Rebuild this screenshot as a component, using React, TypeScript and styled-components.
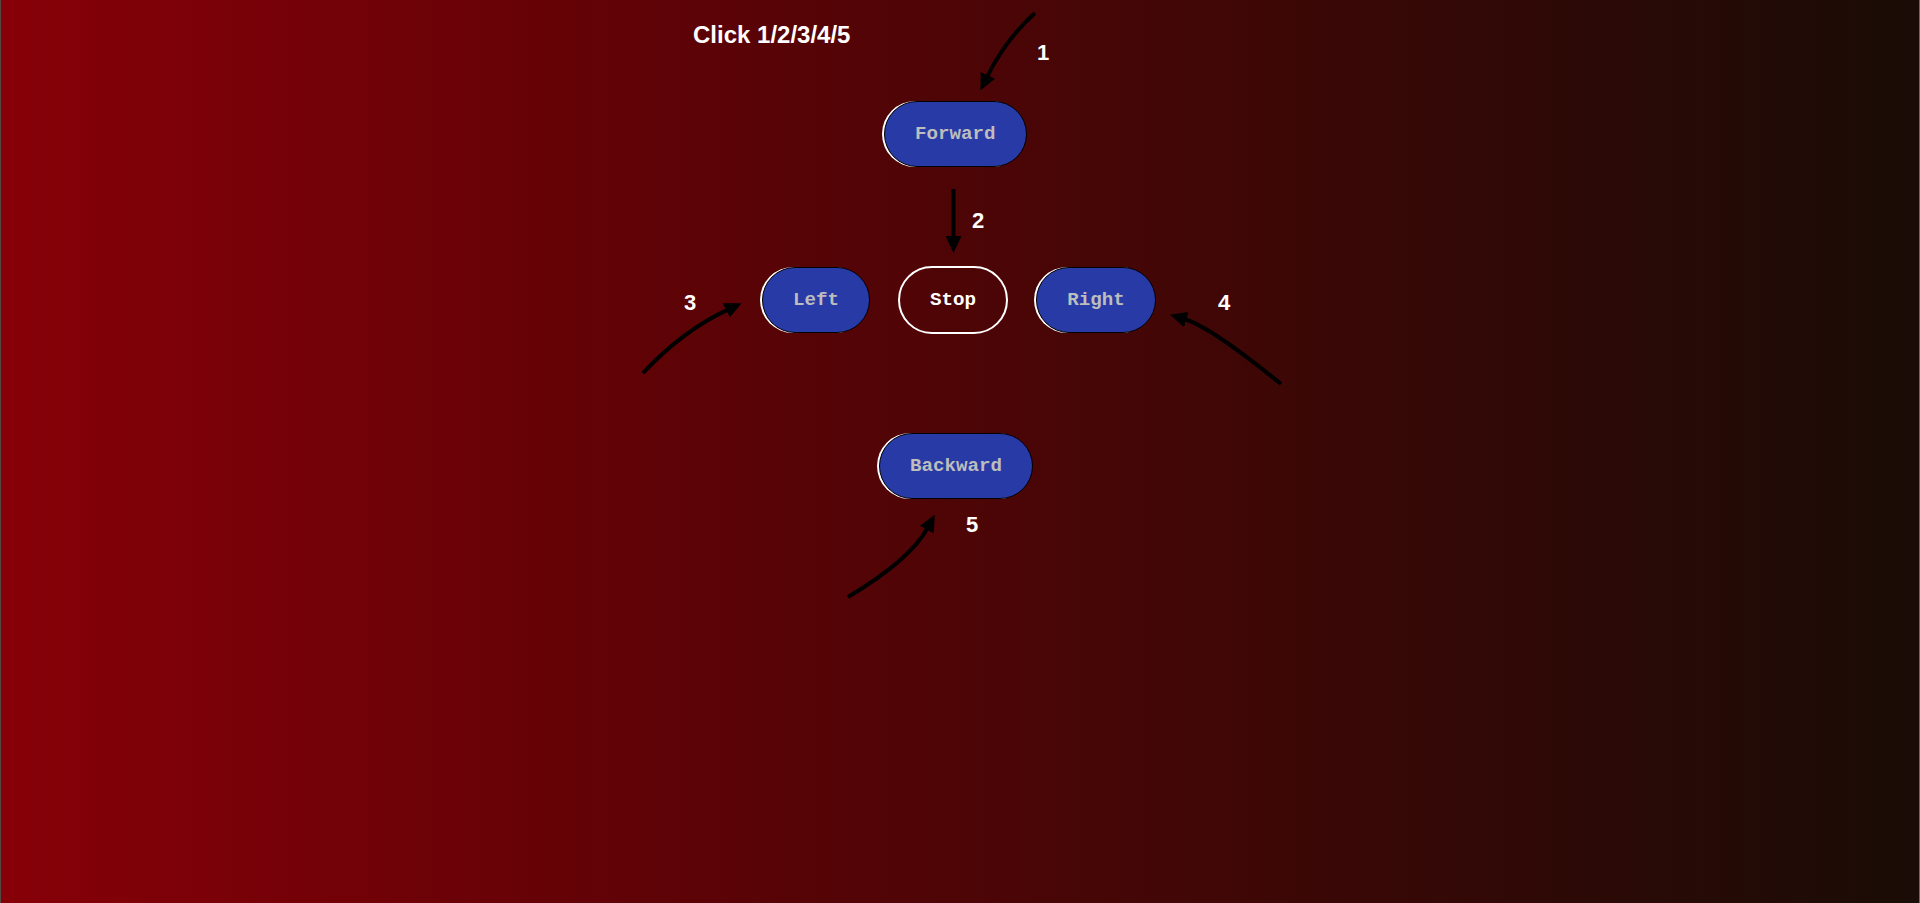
import React from "react";
import styled, { createGlobalStyle } from "styled-components";

const GlobalStyle = createGlobalStyle`
  html, body { margin: 0; padding: 0; height: 100%; }
  body { font-family: "Liberation Sans", Arial, sans-serif; }
  #root { height: 100%; }
`;

const Page = styled.main`
  position: relative;
  box-sizing: border-box;
  min-height: 100vh;
  padding-top: 21px;
  background: linear-gradient(to right, #870008 0%, #5a0306 38%, #1a0c06 100%);
  border-left: 1px solid rgba(255, 255, 255, 0.25);
  border-right: 1px solid rgba(255, 255, 255, 0.3);
  overflow: hidden;
`;

const Title = styled.h2`
  margin: 0 0 0 692px;
  font-size: 24px;
  line-height: 28px;
  font-weight: 700;
  color: #ffffff;
`;

const Row = styled.div<{ $left: number; $top: number; $gap?: number }>`
  display: flex;
  align-items: center;
  gap: ${(p) => p.$gap ?? 0}px;
  margin-top: ${(p) => p.$top}px;
  padding-left: ${(p) => p.$left}px;
`;

const DriveButton = styled.button`
  box-sizing: border-box;
  height: 66px;
  padding: 0 30px;
  border: 1px solid #000;
  border-radius: 33px;
  background: #283aa6;
  box-shadow: -2px 0 0 #ffffff;
  color: #bdbdbd;
  font-family: "Liberation Mono", "Courier New", monospace;
  font-weight: 700;
  font-size: 19.2px;
  cursor: pointer;
`;

const StopButton = styled(DriveButton)`
  height: 68px;
  border: 2px solid #ffffff;
  border-radius: 34px;
  background: transparent;
  box-shadow: none;
  color: #ffffff;
`;

const Step = styled.span<{ $x: number; $y: number }>`
  position: absolute;
  left: ${(p) => p.$x}px;
  top: ${(p) => p.$y}px;
  font-size: 22px;
  line-height: 22px;
  font-weight: 700;
  color: #ffffff;
`;

const Arrows = styled.svg`
  position: absolute;
  left: 0;
  top: 0;
  pointer-events: none;
`;

const arrowPaths = [
  "M1034,13 Q1004,40 986,77",
  "M952.5,189 L952.5,238",
  "M642,373 Q682.5,330 727,309.6",
  "M1280,384 Q1210,327 1183.4,319",
  "M847,597 Q909,560 926.6,528",
];

const steps = [
  { n: "1", x: 1036, y: 42 },
  { n: "2", x: 971, y: 210 },
  { n: "3", x: 683, y: 292 },
  { n: "4", x: 1217, y: 292 },
  { n: "5", x: 965, y: 514 },
];

export default function App() {
  return (
    <>
      <GlobalStyle />
      <Page>
        <Title>Click 1/2/3/4/5</Title>
        <Row $left={883} $top={52}>
          <DriveButton>Forward</DriveButton>
        </Row>
        <Row $left={761} $top={99} $gap={28}>
          <DriveButton>Left</DriveButton>
          <StopButton>Stop</StopButton>
          <DriveButton>Right</DriveButton>
        </Row>
        <Row $left={878} $top={99}>
          <DriveButton>Backward</DriveButton>
        </Row>
        <Arrows width="1920" height="903" viewBox="0 0 1920 903">
          <defs>
            <marker
              id="head"
              markerUnits="userSpaceOnUse"
              markerWidth="17"
              markerHeight="16"
              viewBox="0 0 17 16"
              refX="2"
              refY="8"
              orient="auto"
            >
              <path d="M0,0 L17,8 L0,16 z" fill="#000" />
            </marker>
          </defs>
          {arrowPaths.map((d) => (
            <path key={d} d={d} fill="none" stroke="#000" strokeWidth={4} markerEnd="url(#head)" />
          ))}
        </Arrows>
        {steps.map((s) => (
          <Step key={s.n} $x={s.x} $y={s.y}>
            {s.n}
          </Step>
        ))}
      </Page>
    </>
  );
}
